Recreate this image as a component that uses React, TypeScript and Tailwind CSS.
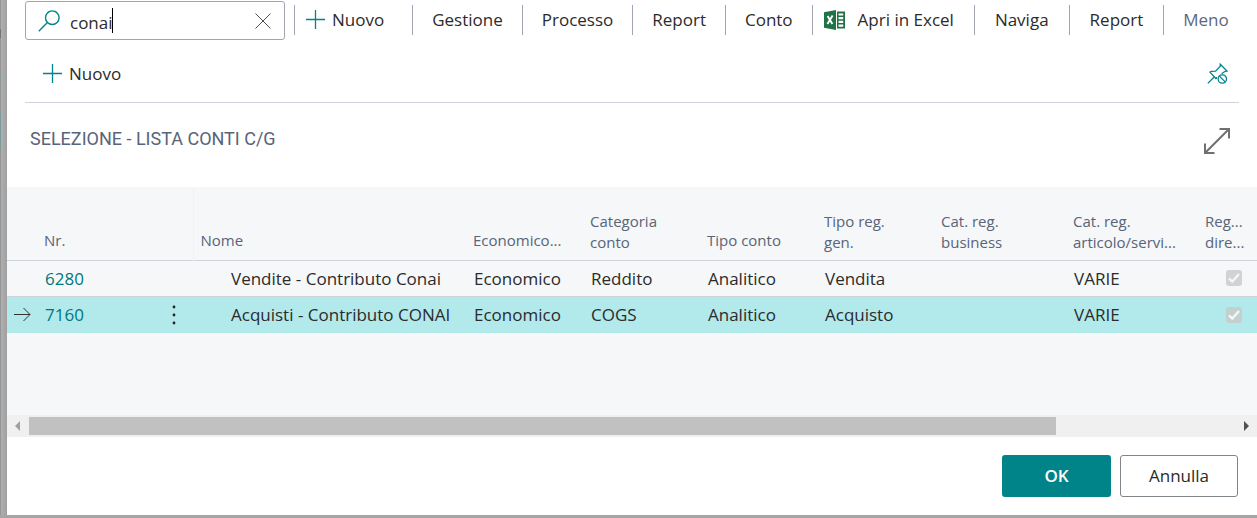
import type { ReactNode } from "react";
import clsx from "clsx";

interface Account {
  no: string;
  name: string;
  incomeBalance: string;
  category: string;
  type: string;
  postingType: string;
  business: string;
  product: string;
  direct: boolean;
}

const accounts: Account[] = [
  {
    no: "6280",
    name: "Vendite - Contributo Conai",
    incomeBalance: "Economico",
    category: "Reddito",
    type: "Analitico",
    postingType: "Vendita",
    business: "",
    product: "VARIE",
    direct: true,
  },
  {
    no: "7160",
    name: "Acquisti - Contributo CONAI",
    incomeBalance: "Economico",
    category: "COGS",
    type: "Analitico",
    postingType: "Acquisto",
    business: "",
    product: "VARIE",
    direct: true,
  },
];

const selectedNo = "7160";

const headers = [
  { lines: [""], width: "w-[30px]" },
  { lines: ["Nr."], width: "w-[118px]" },
  { lines: [""], width: "w-[38px]" },
  { lines: ["Nome"], width: "w-[273px]" },
  { lines: ["Economico..."], width: "w-[117px]" },
  { lines: ["Categoria", "conto"], width: "w-[117px]" },
  { lines: ["Tipo conto"], width: "w-[117px]" },
  { lines: ["Tipo reg.", "gen."], width: "w-[117px]" },
  { lines: ["Cat. reg.", "business"], width: "w-[132px]" },
  { lines: ["Cat. reg.", "articolo/servi..."], width: "w-[132px]" },
  { lines: ["Reg...", "dire..."], width: "" },
];

function PlusIcon() {
  return (
    <svg className="size-5 shrink-0" viewBox="0 0 20 20" fill="none">
      <path d="M9.5 0v19M0 9.5h19" stroke="#00848a" strokeWidth="1.3" />
    </svg>
  );
}

function SearchIcon() {
  return (
    <svg className="size-[22px] shrink-0" viewBox="0 0 22 22" fill="none">
      <g stroke="#00848a" strokeWidth="1.4">
        <circle cx="14.3" cy="7.7" r="6.8" />
        <path d="M9.4 12.6L0.8 21.2" />
      </g>
    </svg>
  );
}

function ExcelIcon() {
  return (
    <svg className="h-5 w-[21px] shrink-0" viewBox="0 0 21 20">
      <path d="M13 1.5h8v17h-8z" fill="#217346" />
      <path
        d="M14.5 3.4h4.7v2.2h-4.7zM14.5 7.1h4.7v2.2h-4.7zM14.5 10.8h4.7V13h-4.7zM14.5 14.5h4.7v2.2h-4.7z"
        fill="#fff"
      />
      <path d="M0 2.2L12 0v20L0 17.8z" fill="#217346" />
      <path
        d="M3.6 6l4.8 8M8.6 5.6l-5.2 8.4"
        stroke="#fff"
        strokeWidth="1.9"
      />
    </svg>
  );
}

function UnpinIcon() {
  return (
    <svg className="size-[22px]" viewBox="0 0 22 22" fill="none">
      <g stroke="#00848a" strokeWidth="1.3">
        <path d="M0.8 20.4l6.4-6.4" />
        <path d="M9.3 16L3 9.2l1.2-.9 4.4-.2 4.7-4.8V1.2L20 8l-1.8.3-3.6 2.4" />
        <path d="M9.3 16v-2" />
        <circle cx="15.3" cy="16" r="4.2" />
        <path d="M12.4 13.1l5.8 5.8" />
      </g>
    </svg>
  );
}

function ExpandIcon() {
  return (
    <svg className="size-7" viewBox="0 0 28 28" fill="none">
      <path
        d="M2 26L26 2M16.5 2H26v9.5M2 16.5V26h9.5"
        stroke="#707070"
        strokeWidth="2"
      />
    </svg>
  );
}

interface ActionProps {
  children: ReactNode;
  className?: string;
}

function Action({ children, className = "px-[19px]" }: ActionProps) {
  return (
    <div className="flex h-[30px] items-center border-l border-[#a0a5b1]">
      <button className={clsx("flex items-center whitespace-nowrap", className)}>
        {children}
      </button>
    </div>
  );
}

function Toolbar() {
  return (
    <div className="flex items-start px-[18px] pt-px">
      <div className="relative flex h-[39px] w-[260px] shrink-0 items-center rounded-[3px] border border-[#a0a5b1] pr-[13px] pl-3">
        <SearchIcon />
        <input
          aria-label="Cerca"
          defaultValue="conai"
          className="ml-[10px] h-full w-0 flex-1 pt-1 outline-none"
        />
        <span className="absolute top-[6px] left-[86px] h-[25px] w-px bg-black" />
        <button aria-label="Cancella">
          <svg className="size-4" viewBox="0 0 16 16" fill="none">
            <path d="M0.5 0.5l15 15M15.5 0.5l-15 15" stroke="#505050" />
          </svg>
        </button>
      </div>
      <div className="ml-[9px] flex items-center pt-1">
        <Action className="gap-[6px] pr-[28px] pl-[11px]">
          <PlusIcon />
          Nuovo
        </Action>
        <Action>Gestione</Action>
        <Action>Processo</Action>
        <Action>Report</Action>
        <Action>Conto</Action>
        <Action className="gap-[13px] pr-5 pl-[11px]">
          <ExcelIcon />
          Apri in Excel
        </Action>
        <Action className="px-5">Naviga</Action>
        <Action className="px-5">Report</Action>
        <Action className="px-[19px] text-[#5c687c]">Meno</Action>
      </div>
    </div>
  );
}

function AccountTable() {
  return (
    <table className="w-full table-fixed border-collapse">
      <thead>
        <tr className="h-[73px] border-b border-[#d0d2da] text-left align-bottom text-[15px] leading-[21px] text-[#586478]">
          {headers.map((header, i) => (
            <th
              key={i}
              className={clsx(
                "pl-[7px] font-normal whitespace-nowrap",
                header.lines.length > 1 ? "pb-[7px]" : "pb-[9px]",
                header.width,
                i === 2 && "border-r border-[#f0f2f4]"
              )}
            >
              {header.lines.map((line) => (
                <div key={line}>{line}</div>
              ))}
            </th>
          ))}
        </tr>
      </thead>
      <tbody>
        {accounts.map((account) => {
          const selected = account.no === selectedNo;
          return (
            <tr
              key={account.no}
              className={clsx(
                "whitespace-nowrap",
                selected
                  ? "h-[37px] bg-[#b2e9eb]"
                  : "h-9 border-b border-[#d0d2da]"
              )}
            >
              <td className="pl-[7px]">
                {selected && (
                  <svg className="h-4 w-[17px]" viewBox="0 0 17 16" fill="none">
                    <path d="M0 7.5h16M9.5 1L16 7.5 9.5 14" stroke="#333" />
                  </svg>
                )}
              </td>
              <td className="pt-px pl-2">
                <a href="#" className="text-[#00777d]">
                  {account.no}
                </a>
              </td>
              <td className="text-center">
                {selected && (
                  <button aria-label="Altre opzioni" className="block px-[17px]">
                    <svg className="h-5 w-1" viewBox="0 0 4 20" fill="#212121">
                      <circle cx="2" cy="2" r="1.4" />
                      <circle cx="2" cy="10" r="1.4" />
                      <circle cx="2" cy="18" r="1.4" />
                    </svg>
                  </button>
                )}
              </td>
              <td className="pt-px pl-[38px]">{account.name}</td>
              <td className="pt-px pl-2">{account.incomeBalance}</td>
              <td className="pt-px pl-2">{account.category}</td>
              <td className="pt-px pl-2">{account.type}</td>
              <td className="pt-px pl-2">{account.postingType}</td>
              <td className="pt-px pl-2">{account.business}</td>
              <td className="pt-px pl-2">{account.product}</td>
              <td className="pl-7">
                <span className="grid size-4">
                  <input
                    type="checkbox"
                    aria-label="Registrazione diretta"
                    defaultChecked={account.direct}
                    disabled
                    className="col-start-1 row-start-1 size-4 appearance-none rounded-[3px] bg-[#c8c8c8]/80"
                  />
                  <svg
                    className="pointer-events-none col-start-1 row-start-1 size-4"
                    viewBox="0 0 16 16"
                    fill="none"
                  >
                    <path
                      d="M3 8.3l3.3 3.3L13 4"
                      stroke="#f4f6f8"
                      strokeWidth="2.4"
                    />
                  </svg>
                </span>
              </td>
            </tr>
          );
        })}
      </tbody>
    </table>
  );
}

function ScrollBar() {
  return (
    <div className="flex h-[22px] items-center bg-[#f0f0f0]">
      <button aria-label="Scorri a sinistra" className="w-[22px] pl-2">
        <svg className="h-[10px] w-[5px]" viewBox="0 0 5 10">
          <path d="M5 0v10L0 5z" fill="#a0a0a0" />
        </svg>
      </button>
      <div className="h-[18px] flex-1">
        <div className="h-full w-[85%] bg-[#c1c1c1]" />
      </div>
      <button aria-label="Scorri a destra" className="w-5 pl-[7px]">
        <svg className="h-[10px] w-[5px]" viewBox="0 0 5 10">
          <path d="M0 0v10l5-5z" fill="#505050" />
        </svg>
      </button>
    </div>
  );
}

export default function App() {
  return (
    <div className="flex bg-[#a5a5a5] pb-[3px] font-['Open_Sans','Noto_Sans',sans-serif] text-[17px] leading-6 text-[#2b2b2b]">
      {/* what is left visible of the page behind the dialog */}
      <div className="flex w-[7px] shrink-0 bg-linear-to-r from-[#b2b2b2] to-[#a0a0a0]">
        <div className="w-px bg-[#959595]">
          <div className="mt-[29px] h-[9px] bg-[#73727e]" />
          <div className="mt-[39px] h-[2px] bg-[#6f9c9c]" />
          <div className="mt-[10px] h-[2px] bg-[#6f9c9c]" />
          <div className="mt-[23px] h-[36px] bg-[#789c9c]" />
        </div>
      </div>
      <div role="dialog" className="min-w-0 flex-1 overflow-hidden bg-white">
        <Toolbar />
        <div className="mx-[18px] flex h-[63px] items-center justify-between border-b border-[#d0d2da] pt-[6px] pr-[10px] pl-[18px]">
          <button className="flex items-center gap-[6px]">
            <PlusIcon />
            Nuovo
          </button>
          <button aria-label="Rimuovi">
            <UnpinIcon />
          </button>
        </div>
        <div className="flex h-[84px] items-start justify-between pt-6 pr-[26px] pl-[23px]">
          <h1 className="font-['Roboto',sans-serif] text-[18px] text-[#586478]">
            SELEZIONE - LISTA CONTI C/G
          </h1>
          <button aria-label="Espandi">
            <ExpandIcon />
          </button>
        </div>
        <div className="min-h-[228px] bg-[#f5f7f9]">
          <AccountTable />
        </div>
        <ScrollBar />
        <div className="flex justify-end gap-[9px] px-[19px] py-[18px]">
          <button className="h-[42px] w-[109px] rounded-[3px] bg-[#00848a] font-semibold text-white">
            OK
          </button>
          <button className="h-[42px] w-[118px] rounded-[3px] border border-[#80858a] font-medium">
            Annulla
          </button>
        </div>
      </div>
    </div>
  );
}
